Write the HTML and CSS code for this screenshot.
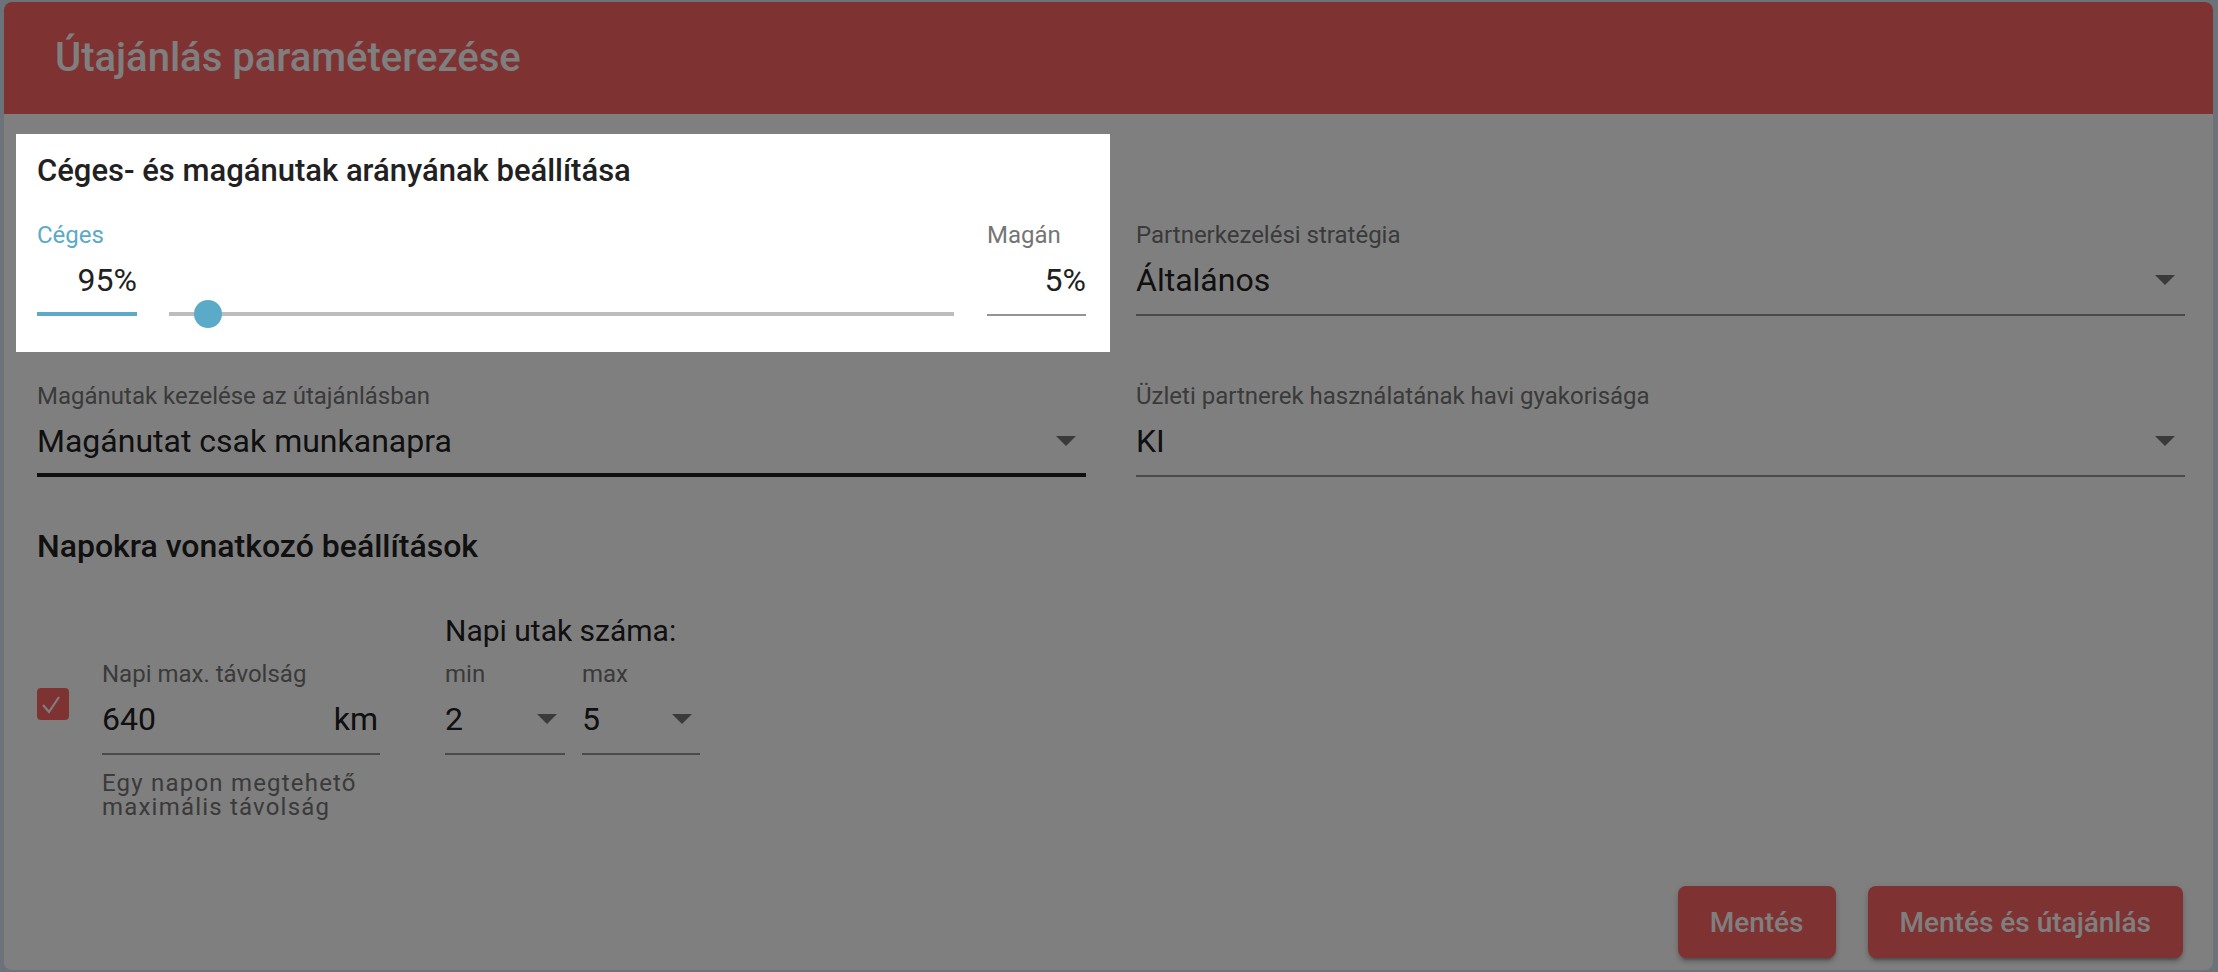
FILE: index.html
```html
<!DOCTYPE html>
<html lang="hu">
<head>
    <meta charset="UTF-8">
    <meta name="viewport" content="width=device-width, initial-scale=1.0">
    <title>Útajánlás paraméterezése</title>
    <link rel="stylesheet" href="styles.css">
</head>
<body>
    <div class="dialog">
        <div class="dialog-header">
            <h1>Útajánlás paraméterezése</h1>
        </div>

        <div class="dialog-body">
            <div class="form-grid">
                <!-- highlighted by the tour -->
                <div class="ratio-box">
                    <h2 class="section-title">Céges- és magánutak arányának beállítása</h2>
                    <div class="ratio-row">
                        <div class="field field-company focused">
                            <div class="field-label">Céges</div>
                            <div class="field-input">
                                <span class="field-value align-right">95%</span>
                            </div>
                        </div>
                        <div class="slider">
                            <span class="slider-thumb"></span>
                        </div>
                        <div class="field field-private">
                            <div class="field-label">Magán</div>
                            <div class="field-input">
                                <span class="field-value align-right">5%</span>
                            </div>
                        </div>
                    </div>
                </div>

                <div class="field top-right">
                    <div class="field-label">Partnerkezelési stratégia</div>
                    <div class="field-input">
                        <span class="field-value">Általános</span>
                        <svg class="select-arrow" viewBox="0 0 20 10"><path d="M0 0h20L10 10z"/></svg>
                    </div>
                </div>

                <div class="field hovered">
                    <div class="field-label">Magánutak kezelése az útajánlásban</div>
                    <div class="field-input">
                        <span class="field-value">Magánutat csak munkanapra</span>
                        <svg class="select-arrow" viewBox="0 0 20 10"><path d="M0 0h20L10 10z"/></svg>
                    </div>
                </div>

                <div class="field">
                    <div class="field-label">Üzleti partnerek használatának havi gyakorisága</div>
                    <div class="field-input">
                        <span class="field-value">KI</span>
                        <svg class="select-arrow" viewBox="0 0 20 10"><path d="M0 0h20L10 10z"/></svg>
                    </div>
                </div>
            </div>

            <h2 class="section-title daily-title">Napokra vonatkozó beállítások</h2>

            <div class="daily">
                <div class="trips-title">Napi utak száma:</div>

                <span class="checkbox">
                    <svg viewBox="0 0 32 32"><polyline points="6,17 12,24 22,9"/></svg>
                </span>

                <div class="field distance">
                    <div class="field-label">Napi max. távolság</div>
                    <div class="field-input">
                        <span class="field-value">640</span>
                        <span class="field-suffix">km</span>
                    </div>
                    <div class="field-help">Egy napon megtehető maximális távolság</div>
                </div>

                <div class="trips">
                    <div class="field">
                        <div class="field-label">min</div>
                        <div class="field-input">
                            <span class="field-value">2</span>
                            <svg class="select-arrow" viewBox="0 0 20 10"><path d="M0 0h20L10 10z"/></svg>
                        </div>
                    </div>
                    <div class="field">
                        <div class="field-label">max</div>
                        <div class="field-input">
                            <span class="field-value">5</span>
                            <svg class="select-arrow" viewBox="0 0 20 10"><path d="M0 0h20L10 10z"/></svg>
                        </div>
                    </div>
                </div>
            </div>

            <div class="actions">
                <button class="btn">Mentés</button>
                <button class="btn">Mentés és útajánlás</button>
            </div>
        </div>
    </div>
</body>
</html>
```

FILE: styles.css
```css
:root {
    --red: #ff6464;
    --blue: #5aaac8;
    --text: #212121;
    --muted: #757575;
    --line: #949494;
}

* {
    margin: 0;
    padding: 0;
    box-sizing: border-box;
}

body {
    font-family: Roboto, 'Liberation Sans', sans-serif;
    background-color: #d6e4f2;
    height: 100vh;
    overflow: hidden;
}

.dialog {
    margin: 2px 5px 0 4px;
    height: 968px;
    background: white;
    border-radius: 8px;
    display: flex;
    flex-direction: column;
}

.dialog-header {
    height: 112px;
    background-color: var(--red);
    border-radius: 8px 8px 0 0;
    display: flex;
    align-items: center;
    padding-left: 51px;
}

.dialog-header h1 {
    font-size: 40px;
    line-height: 46px;
    font-weight: 500;
    color: white;
}

.dialog-body {
    flex: 1;
    display: flex;
    flex-direction: column;
    padding: 20px 28px 12px 33px;
}

.form-grid {
    display: grid;
    grid-template-columns: 1fr 1fr;
    column-gap: 50px;
    row-gap: 30px;
    align-items: end;
}

.section-title {
    font-size: 32px;
    line-height: 34px;
    font-weight: 500;
    color: var(--text);
}

/* tour spotlight */
.ratio-box {
    position: relative;
    z-index: 10;
    background: white;
    margin: 0 -24px 0 -21px;
    padding: 20px 24px 36px 21px;
    box-shadow: 0 0 0 3000px rgba(0, 0, 0, 0.5);
}

.ratio-box .section-title {
    font-size: 31px;
    margin-bottom: 33px;
}

.ratio-row {
    display: flex;
    align-items: flex-end;
}

.field-company {
    width: 100px;
}

.field-private {
    width: 99px;
}

.slider {
    flex: 1;
    height: 4px;
    margin: 0 33px 0 32px;
    background: #bdbdbd;
    position: relative;
}

.slider-thumb {
    position: absolute;
    left: calc(5% - 14px);
    top: -12px;
    width: 28px;
    height: 28px;
    border-radius: 50%;
    background: var(--blue);
}

.top-right {
    margin-bottom: 36px;
}

/* text fields / selects */
.field-label {
    font-size: 24px;
    line-height: 28px;
    color: var(--muted);
    white-space: nowrap;
}

.field-input {
    display: flex;
    align-items: center;
    margin-top: 12px;
    padding-bottom: 15px;
    border-bottom: 2px solid var(--line);
    font-size: 32px;
    line-height: 38px;
    color: var(--text);
}

.field-value {
    flex: 1;
}

.align-right {
    text-align: right;
}

.focused .field-label {
    color: var(--blue);
}

.focused .field-input {
    border-bottom-color: var(--blue);
    box-shadow: inset 0 -2px 0 var(--blue);
}

.hovered .field-input {
    border-bottom-color: var(--text);
    box-shadow: inset 0 -2px 0 var(--text);
}

.select-arrow {
    width: 20px;
    height: 10px;
    margin-right: 10px;
    fill: var(--muted);
}

.field-suffix {
    margin-right: 2px;
}

.field-help {
    margin-top: 16px;
    font-size: 24px;
    line-height: 24px;
    letter-spacing: 1.2px;
    color: var(--muted);
}

/* daily settings */
.daily-title {
    margin-top: 52px;
}

.daily {
    display: grid;
    grid-template-columns: 32px 278px auto;
    column-gap: 33px;
    row-gap: 12px;
    align-items: start;
    margin-top: 51px;
}

.trips-title {
    grid-column: 3;
    margin-left: 32px;
    font-size: 30px;
    line-height: 34px;
    color: var(--text);
}

.checkbox {
    grid-row: 2;
    grid-column: 1;
    width: 32px;
    height: 32px;
    margin-top: 28px;
    border-radius: 4px;
    background: var(--red);
}

.checkbox svg {
    display: block;
    width: 32px;
    height: 32px;
    fill: none;
    stroke: white;
    stroke-width: 2.2;
}

.distance {
    grid-row: 2;
    grid-column: 2;
}

.trips {
    grid-row: 2;
    grid-column: 3;
    margin-left: 32px;
    display: grid;
    grid-template-columns: 120px 118px;
    column-gap: 17px;
}

.trips .select-arrow {
    margin-right: 8px;
}

/* buttons */
.actions {
    margin-top: auto;
    margin-right: 2px;
    display: flex;
    justify-content: flex-end;
    gap: 32px;
}

.btn {
    height: 72px;
    padding: 0 32px;
    border: none;
    border-radius: 8px;
    background-color: var(--red);
    color: white;
    font-family: inherit;
    font-size: 28px;
    font-weight: 500;
    box-shadow: 0 6px 2px -4px rgba(0,0,0,0.2), 0 4px 4px 0 rgba(0,0,0,0.14), 0 2px 10px 0 rgba(0,0,0,0.12);
    cursor: pointer;
}
```
